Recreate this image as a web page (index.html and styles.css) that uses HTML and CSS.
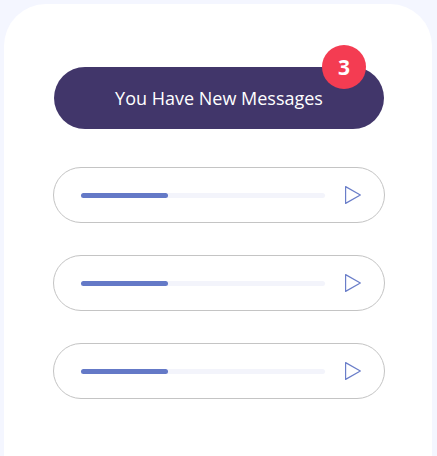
FILE: index.html
```html
<!DOCTYPE html>
<html>
<head>
<meta charset="utf-8">
<link rel="stylesheet" href="styles.css">
</head>
<body>
<div class="card">
  <div class="stack">
    <button class="notify">You Have New Messages<span class="badge">3</span></button>
    <div class="player">
      <div class="track"><div class="fill"></div></div>
      <svg class="play" width="18" height="20" viewBox="0 0 18 20"><path d="M1.6 1.6 L16.4 10 L1.6 18.4 Z" fill="none" stroke="#6a7ec9" stroke-width="1.2" stroke-linejoin="round"/></svg>
    </div>
    <div class="player">
      <div class="track"><div class="fill"></div></div>
      <svg class="play" width="18" height="20" viewBox="0 0 18 20"><path d="M1.6 1.6 L16.4 10 L1.6 18.4 Z" fill="none" stroke="#6a7ec9" stroke-width="1.2" stroke-linejoin="round"/></svg>
    </div>
    <div class="player">
      <div class="track"><div class="fill"></div></div>
      <svg class="play" width="18" height="20" viewBox="0 0 18 20"><path d="M1.6 1.6 L16.4 10 L1.6 18.4 Z" fill="none" stroke="#6a7ec9" stroke-width="1.2" stroke-linejoin="round"/></svg>
    </div>
  </div>
</div>
</body>
</html>
```
FILE: styles.css
```css
html, body {
  margin: 0;
  height: 100%;
  overflow: hidden;
}
body {
  background: #f4f6ff;
  padding: 4px 5px 0 4px;
  font-family: "Open Sans", "Noto Sans", sans-serif;
  box-sizing: border-box;
}
.card {
  background: #ffffff;
  border-radius: 42px 42px 0 0;
  height: 100%;
  padding: 63px 0 0 49px;
  box-sizing: border-box;
}
.stack {
  width: 332px;
  display: flex;
  flex-direction: column;
  gap: 32px;
}
.notify {
  position: relative;
  margin: 0 1px 6px;
  height: 62px;
  border: none;
  border-radius: 31px;
  background: #41366a;
  color: #ffffff;
  font-family: "Open Sans", "Noto Sans", sans-serif;
  font-size: 18px;
  padding: 0;
}
.badge {
  position: absolute;
  top: -22px;
  right: 18px;
  width: 44px;
  height: 44px;
  border-radius: 50%;
  background: #f43c52;
  color: #ffffff;
  font-weight: 700;
  font-size: 21px;
  display: flex;
  align-items: center;
  justify-content: center;
}
.player {
  height: 56px;
  border: 1px solid #c4c4c4;
  border-radius: 28px;
  box-sizing: border-box;
  display: flex;
  align-items: center;
  padding: 0 22px 0 27px;
}
.track {
  width: 245px;
  height: 5px;
  border-radius: 3px;
  background: #f3f4fb;
  margin-right: 19px;
}
.fill {
  width: 87px;
  height: 100%;
  border-radius: 3px;
  background: #6479c7;
}
.play {
  display: block;
}
```
